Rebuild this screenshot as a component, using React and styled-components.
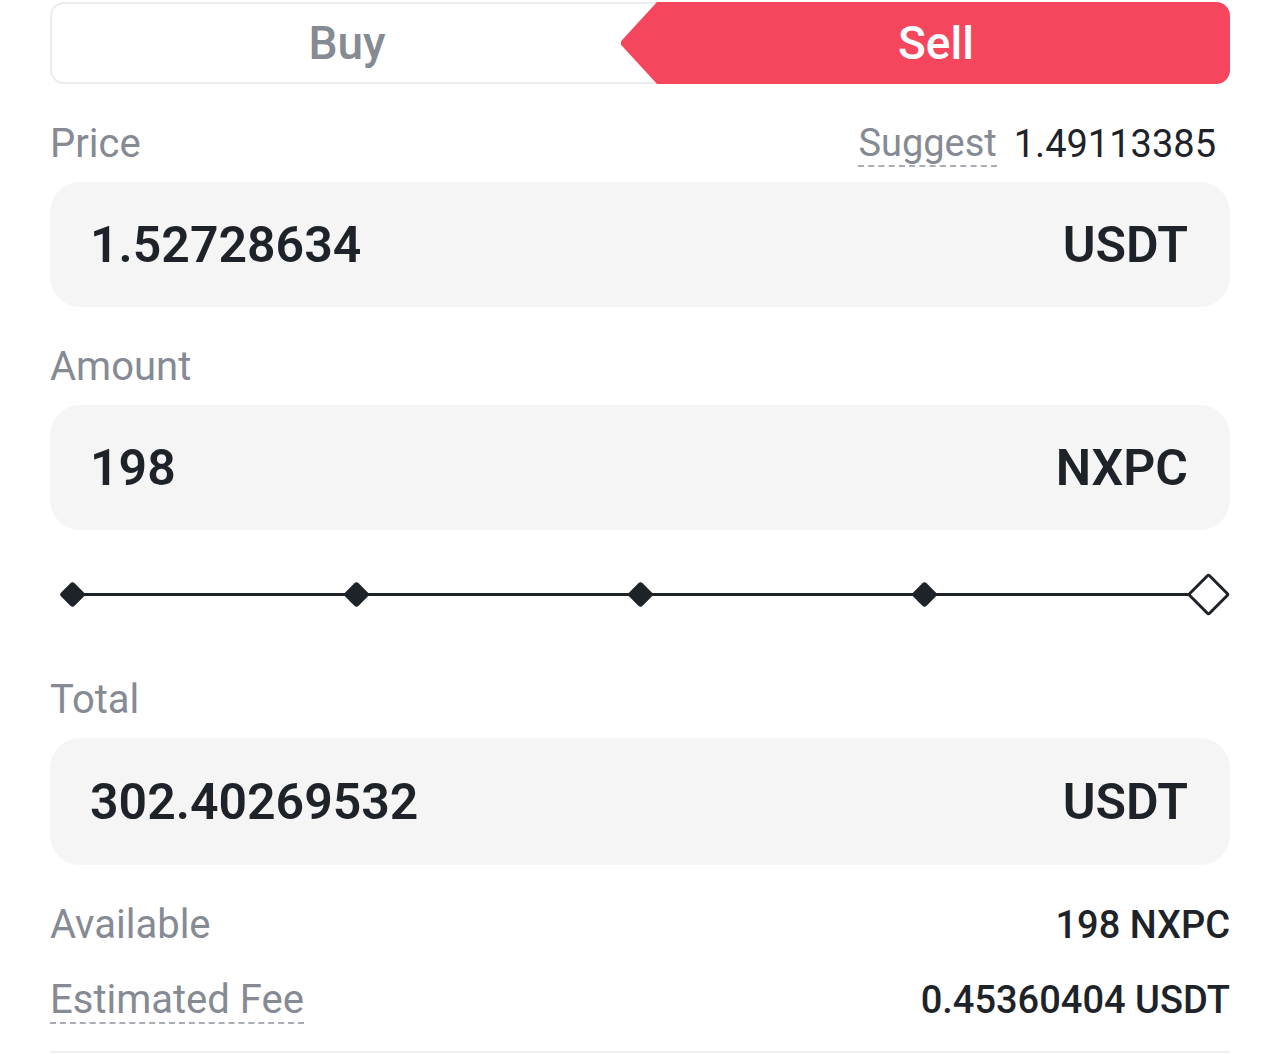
import React from "react";
import styled, { createGlobalStyle } from "styled-components";

const GlobalStyle = createGlobalStyle`
  html, body {
    margin: 0;
    padding: 0;
    background: #ffffff;
  }
  body {
    font-family: Roboto, "Noto Sans", "Liberation Sans", sans-serif;
    color: #1e2329;
  }
`;

const fields = [
  { label: "Price", value: "1.52728634", unit: "USDT", suggest: "1.49113385" },
  { label: "Amount", value: "198", unit: "NXPC" },
];

const marks = [true, true, true, true, false];

const App = () => {
  return (
    <Page>
      <GlobalStyle />
      <Toggle>
        <BuyTab>Buy</BuyTab>
        <SellTab>Sell</SellTab>
      </Toggle>

      {fields.map((f) => (
        <React.Fragment key={f.label}>
          <LabelRow>
            <Label>{f.label}</Label>
            {f.suggest && (
              <Suggest>
                <Dotted>Suggest</Dotted>
                <SuggestValue>{f.suggest}</SuggestValue>
              </Suggest>
            )}
          </LabelRow>
          <InputBox>
            <Value>{f.value}</Value>
            <Value>{f.unit}</Value>
          </InputBox>
        </React.Fragment>
      ))}

      <SliderWrap>
        <Track>
          {marks.map((filled, i) => (
            <Mark key={i}>
              <Diamond $filled={filled} />
            </Mark>
          ))}
        </Track>
      </SliderWrap>

      <LabelRow>
        <Label>Total</Label>
      </LabelRow>
      <InputBox $tall>
        <Value>302.40269532</Value>
        <Value>USDT</Value>
      </InputBox>

      <InfoList>
        <InfoRow>
          <Label>Available</Label>
          <InfoValue>198 NXPC</InfoValue>
        </InfoRow>
        <InfoRow>
          <Label>
            <Dotted>Estimated Fee</Dotted>
          </Label>
          <InfoValue>0.45360404 USDT</InfoValue>
        </InfoRow>
      </InfoList>
    </Page>
  );
};

const Page = styled.div`
  width: 1180px;
  margin: 0 auto;
  padding-top: 2px;
  border-bottom: 2px solid #eef0f2;
`;

const Toggle = styled.div`
  display: flex;
  height: 78px;
  border: 2px solid #eaecef;
  border-radius: 14px;
  background: #fff;
`;

const BuyTab = styled.div`
  flex: 0 0 590px;
  display: flex;
  align-items: center;
  justify-content: center;
  font-size: 46px;
  font-weight: 500;
  color: #858a93;
`;

const SellTab = styled.div`
  flex: 1;
  margin: -2px -2px -2px -22px;
  padding-left: 22px;
  display: flex;
  align-items: center;
  justify-content: center;
  background: #f6465d;
  color: #fff;
  font-size: 46px;
  font-weight: 500;
  border-radius: 0 14px 14px 0;
  clip-path: polygon(37px 0, 100% 0, 100% 100%, 37px 100%, 1px 52%, 1px 48%);
`;

const LabelRow = styled.div`
  display: flex;
  align-items: center;
  justify-content: space-between;
  padding: 37px 0 15px;
  height: 46px;
`;

const Label = styled.div`
  font-size: 40px;
  line-height: 46px;
  color: #858a93;
`;

const Suggest = styled.div`
  display: flex;
  align-items: center;
  gap: 17px;
  padding-right: 14px;
  font-size: 38px;
  line-height: 46px;
`;

const Dotted = styled.span`
  display: inline-block;
  color: #858a93;
  line-height: 44px;
  border-bottom: 2px dashed #a9aeb5;
`;

const SuggestValue = styled.span`
  color: #1e2329;
`;

const InputBox = styled.div`
  display: flex;
  align-items: center;
  justify-content: space-between;
  height: ${(p) => (p.$tall ? "127px" : "125px")};
  padding: 0 42px 0 40px;
  border-radius: 30px;
  background: #f5f5f5;
`;

const Value = styled.span`
  font-size: 50px;
  font-weight: 600;
  color: #1e2329;
`;

const SliderWrap = styled.div`
  padding: 42px 0 24px;
`;

const Track = styled.div`
  position: relative;
  display: flex;
  align-items: center;
  justify-content: space-between;
  height: 44px;

  &::before {
    content: "";
    position: absolute;
    left: 22px;
    right: 22px;
    top: 50%;
    height: 3px;
    margin-top: -1.5px;
    background: #1e2329;
  }
`;

const Mark = styled.div`
  position: relative;
  width: 44px;
  height: 44px;
  display: flex;
  align-items: center;
  justify-content: center;
`;

const Diamond = styled.div`
  width: ${(p) => (p.$filled ? "19px" : "25px")};
  height: ${(p) => (p.$filled ? "19px" : "25px")};
  transform: rotate(45deg);
  border-radius: 3px;
  background: ${(p) => (p.$filled ? "#1e2329" : "#fff")};
  border: ${(p) => (p.$filled ? "none" : "3px solid #1e2329")};
`;

const InfoList = styled.div`
  display: flex;
  flex-direction: column;
  gap: 29px;
  padding: 37px 0 28px;
`;

const InfoRow = styled.div`
  display: flex;
  align-items: center;
  justify-content: space-between;
  height: 46px;
`;

const InfoValue = styled.span`
  font-size: 38px;
  font-weight: 500;
  color: #1e2329;
`;

export default App;
